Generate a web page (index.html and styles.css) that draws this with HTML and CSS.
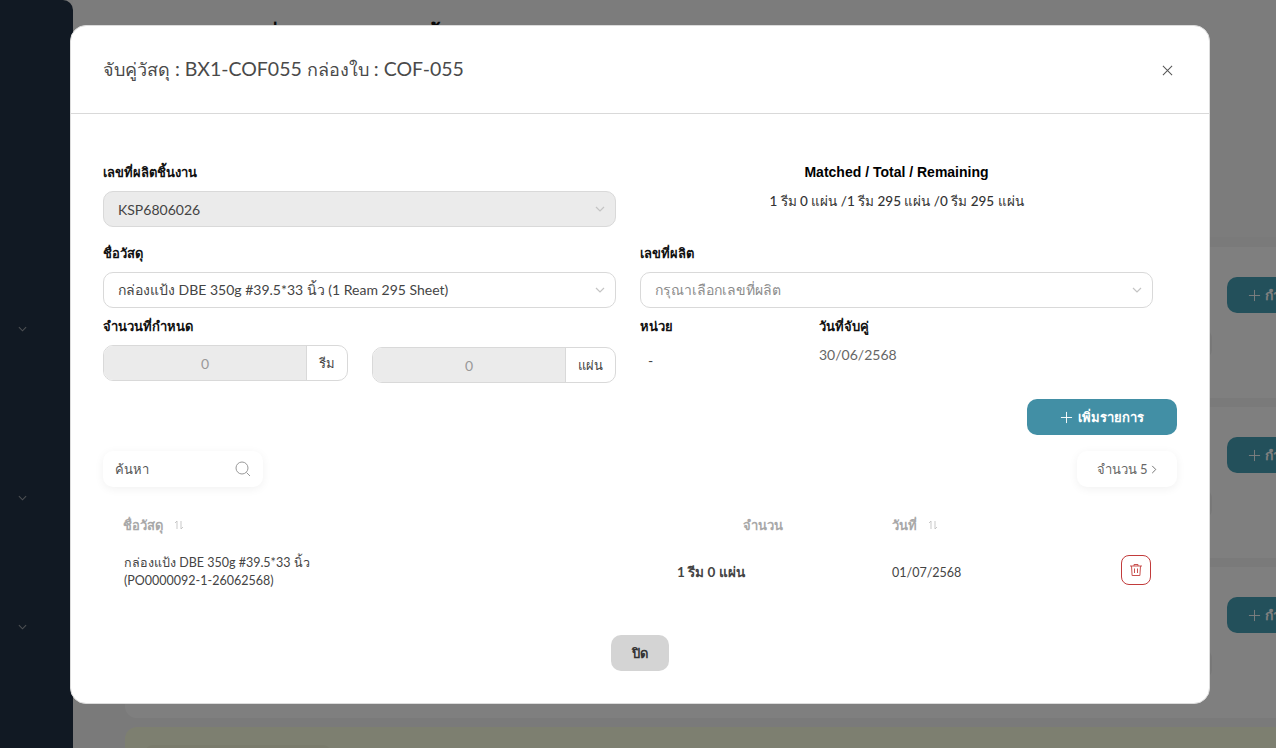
FILE: index.html
```html
<!DOCTYPE html>
<html lang="th">
<head>
  <meta charset="utf-8" />
  <title>จับคู่วัสดุ</title>
  <link rel="stylesheet" href="styles.css">
</head>
<body>
  <div class="page">
    <aside class="sidebar">
      <svg class="side-arrow first" viewBox="0 0 10 6"><path d="M1 1l4 4 4-4"/></svg>
      <svg class="side-arrow second" viewBox="0 0 10 6"><path d="M1 1l4 4 4-4"/></svg>
      <svg class="side-arrow third" viewBox="0 0 10 6"><path d="M1 1l4 4 4-4"/></svg>
    </aside>
    <main class="content">
      <header class="top-card"><h1 class="page-title">รายการที่ต้องจัดการ งานทั้งหมด</h1></header>
      <section class="bg-card"><span class="bg-pill"></span><span class="bg-btn"><svg viewBox="0 0 14 14"><path d="M7 1v12M1 7h12"/></svg>กำหนด</span></section>
      <section class="bg-card"><span class="bg-pill"></span><span class="bg-btn"><svg viewBox="0 0 14 14"><path d="M7 1v12M1 7h12"/></svg>กำหนด</span></section>
      <section class="bg-card"><span class="bg-pill"></span><span class="bg-btn"><svg viewBox="0 0 14 14"><path d="M7 1v12M1 7h12"/></svg>กำหนด</span></section>
      <section class="bg-card olive"><span class="bg-chip"></span></section>
    </main>
  </div>

  <div class="backdrop"></div>

  <div class="modal">
    <header class="modal-head">
      <h2><span class="th">จับคู่วัสดุ</span> : BX1-COF055 <span class="th">กล่องใบ</span> : COF-055</h2>
      <svg class="close-x" viewBox="0 0 12 12"><path d="M1 1l10 10M11 1L1 11"/></svg>
    </header>

    <div class="modal-body">
      <div class="form-grid">
        <div class="field field-job">
          <label>เลขที่ผลิตชิ้นงาน</label>
          <div class="select disabled">
            <span>KSP6806026</span>
            <svg class="chev" viewBox="0 0 10 6"><path d="M1 1l4 4 4-4"/></svg>
          </div>
        </div>
        <div class="summary">
          <strong>Matched / Total / Remaining</strong>
          <p>1 รีม 0 แผ่น /1 รีม 295 แผ่น /0 รีม 295 แผ่น</p>
        </div>
        <div class="field field-mat">
          <label>ชื่อวัสดุ</label>
          <div class="select">
            <span>กล่องแป้ง DBE 350g #39.5*33 นิ้ว (1 Ream 295 Sheet)</span>
            <svg class="chev" viewBox="0 0 10 6"><path d="M1 1l4 4 4-4"/></svg>
          </div>
        </div>
        <div class="field field-mat">
          <label>เลขที่ผลิต</label>
          <div class="select">
            <span class="placeholder">กรุณาเลือกเลขที่ผลิต</span>
            <svg class="chev" viewBox="0 0 10 6"><path d="M1 1l4 4 4-4"/></svg>
          </div>
        </div>
        <div class="field-qty">
          <label>จำนวนที่กำหนด</label>
          <div class="qty-row">
            <div class="qty"><span class="qty-val">0</span><span class="qty-unit">รีม</span></div>
            <div class="qty lower"><span class="qty-val">0</span><span class="qty-unit">แผ่น</span></div>
          </div>
        </div>
        <div class="field-info">
          <div class="info-unit">
            <label>หน่วย</label>
            <span class="info-dash">-</span>
          </div>
          <div>
            <label>วันที่จับคู่</label>
            <span class="info-date">30/06/2568</span>
          </div>
        </div>
      </div>

      <div class="add-row">
        <button class="btn-add"><svg viewBox="0 0 14 14"><path d="M7 1v12M1 7h12"/></svg>เพิ่มรายการ</button>
      </div>

      <div class="tools">
        <div class="search">
          <span>ค้นหา</span>
          <svg viewBox="0 0 16 16"><circle cx="7" cy="7" r="6"/><path d="M11.5 11.5L15 15"/></svg>
        </div>
        <div class="count">จำนวน 5 <svg viewBox="0 0 6 10"><path d="M1 1l4 4-4 4"/></svg></div>
      </div>

      <div class="tbl tbl-head">
        <div>ชื่อวัสดุ <svg class="sort" viewBox="0 0 10 10"><path d="M3 9V1L1 3M7 1v8l2-2"/></svg></div>
        <div class="amount">จำนวน</div>
        <div class="date">วันที่ <svg class="sort" viewBox="0 0 10 10"><path d="M3 9V1L1 3M7 1v8l2-2"/></svg></div>
        <div></div>
      </div>
      <div class="tbl tbl-row">
        <div class="mat-name">กล่องแป้ง DBE 350g #39.5*33 นิ้ว<br>(PO0000092-1-26062568)</div>
        <div class="amount-val">1 รีม 0 แผ่น</div>
        <div class="date">01/07/2568</div>
        <div>
          <button class="btn-del">
            <svg viewBox="0 0 14 14"><path d="M1 3h12M5 3V1.500h4V3M2.500 3l.6 9.500h7.800l.6-9.500M5.500 5.500v4.500M8.500 5.500v4.500"/></svg>
          </button>
        </div>
      </div>

      <div class="foot">
        <button class="btn-close">ปิด</button>
      </div>
    </div>
  </div>
</body>
</html>
```

FILE: styles.css
```css
html, body {
  margin: 0;
  height: 100%;
  overflow: hidden;
}

body {
  font-family: 'Lato', 'Noto Sans', sans-serif;
  font-size: 14px;
  color: #444;
  background-color: #f5f5f5;
}

.page {
  display: flex;
  width: 1400px;
  height: 748px;
}

.sidebar {
  position: relative;
  width: 73px;
  flex: none;
  background-color: #223346;
  border-top-right-radius: 10px;
}

.side-arrow {
  position: absolute;
  left: 18px;
  width: 9px;
  height: 6px;
  fill: none;
  stroke: #9a9fa6;
  stroke-width: 1.2;
}
.side-arrow.first { top: 326px; }
.side-arrow.second { top: 495px; }
.side-arrow.third { top: 624px; }

.content {
  flex: 1;
  padding-left: 52px;
}

.top-card {
  height: 237px;
  margin: 0 0 10px -52px;
  background-color: #f9f9f9;
}

.page-title {
  margin: 0;
  padding: 20px 0 0 116px;
  font-size: 22px;
  font-weight: 700;
  word-spacing: 1px;
  color: #111;
}

.bg-card {
  display: flex;
  align-items: flex-start;
  height: 151px;
  margin-bottom: 9px;
  padding-top: 30px;
  box-sizing: border-box;
  background-color: #ffffff;
  border-radius: 12px;
}

.bg-pill {
  width: 100px;
  height: 28px;
  margin: 53px 0 0 987px;
  background-color: #f0f0f0;
  border-radius: 8px;
}

.bg-btn {
  display: flex;
  align-items: center;
  gap: 4px;
  width: 150px;
  height: 36px;
  margin-left: 15px;
  padding-left: 21px;
  box-sizing: border-box;
  color: #fff;
  font-weight: 700;
  background-color: #46a0b6;
  border-radius: 10px;
}

.bg-btn svg {
  width: 13px;
  height: 13px;
  fill: none;
  stroke: #fff;
}

.bg-card.olive {
  background-color: #fbfee0;
  padding: 18px 0 0 20px;
}

.bg-chip {
  width: 186px;
  height: 30px;
  background-color: #f4f7d8;
  border-radius: 8px;
}

.backdrop {
  position: fixed;
  inset: 0;
  background-color: rgba(0, 0, 0, 0.5);
}

.modal {
  position: fixed;
  left: 70px;
  top: 25px;
  width: 1140px;
  height: 679px;
  box-sizing: border-box;
  background-color: #fff;
  border: 1px solid #dcdcdc;
  border-radius: 16px;
}

.modal-head {
  display: flex;
  align-items: center;
  justify-content: space-between;
  height: 87px;
  padding: 0 36px 0 32px;
  border-bottom: 1px solid #d9d9d9;
}

.modal-head h2 {
  margin: 0;
  font-size: 19.500px;
  font-weight: 400;
  color: #4a4a4a;
}

.modal-head .th {
  font-size: 18px;
}

.close-x {
  width: 11px;
  height: 11px;
  margin-top: 2px;
  fill: none;
  stroke: #555;
  stroke-width: 1.100;
}

.modal-body {
  padding: 48px 32px 0;
}

.form-grid {
  display: grid;
  grid-template-columns: 513px 513px;
  column-gap: 24px;
}

label {
  display: block;
  font-size: 13px;
  font-weight: 700;
  line-height: 20px;
  color: #111;
}

.select {
  display: flex;
  align-items: center;
  justify-content: space-between;
  height: 36px;
  margin-top: 9px;
  padding: 0 10px 0 14px;
  box-sizing: border-box;
  border: 1px solid #d9d9d9;
  border-radius: 10px;
  font-size: 14px;
  color: #444;
}

.select.disabled {
  background-color: #ebebeb;
}

.placeholder {
  color: #8c8c8c;
}

.chev {
  width: 10px;
  height: 6px;
  fill: none;
  stroke: #c4c4c4;
  stroke-width: 1.200;
}

.field-job {
  height: 71px;
}

.field-mat {
  height: 65px;
  margin-top: 10px;
}

.summary {
  text-align: center;
  font-size: 14px;
}

.summary strong {
  display: block;
  font-family: 'Liberation Sans', sans-serif;
  line-height: 20px;
  color: #000;
}

.summary p {
  margin: 9px 0 0;
  line-height: 20px;
  font-size: 13.500px;
  font-weight: 500;
  color: #333;
}

.field-qty {
  margin-top: 8px;
}

.qty-row {
  display: grid;
  grid-template-columns: 245px 244px;
  column-gap: 24px;
  align-items: start;
  margin-top: 9px;
}

.qty {
  display: flex;
  height: 36px;
  box-sizing: border-box;
  border: 1px solid #d9d9d9;
  border-radius: 10px;
  overflow: hidden;
}

.qty.lower {
  margin-top: 2px;
}

.qty-val {
  flex: 1;
  display: flex;
  align-items: center;
  justify-content: center;
  color: #999;
  background-color: #ebebeb;
}

.qty-unit {
  display: flex;
  align-items: center;
  justify-content: center;
  padding: 0 12px;
  border-left: 1px solid #d9d9d9;
  font-size: 13px;
  font-weight: 500;
  color: #444;
}

.field-info {
  display: flex;
  margin-top: 8px;
}

.info-unit {
  width: 179px;
}

.info-dash {
  display: block;
  margin: 16px 0 0 8px;
}

.info-date {
  display: block;
  margin-top: 10px;
  color: #666;
}

.add-row {
  display: flex;
  justify-content: flex-end;
  margin-top: 16px;
}

button {
  font-family: inherit;
  border: none;
}

.btn-add {
  display: flex;
  align-items: center;
  justify-content: center;
  gap: 5px;
  width: 150px;
  height: 36px;
  font-size: 13px;
  font-weight: 700;
  color: #fff;
  background-color: #428fa5;
  border-radius: 10px;
}

.btn-add svg {
  width: 13px;
  height: 13px;
  fill: none;
  stroke: #fff;
}

.tools {
  display: flex;
  justify-content: space-between;
  margin-top: 16px;
}

.search, .count {
  display: flex;
  align-items: center;
  height: 36px;
  box-sizing: border-box;
  background-color: #fff;
  border-radius: 10px;
  box-shadow: 0 2px 10px rgba(0, 0, 0, 0.06);
}

.search {
  justify-content: space-between;
  width: 160px;
  padding: 0 12px;
  font-size: 13px;
  color: #555;
}

.search svg {
  width: 16px;
  height: 16px;
  fill: none;
  stroke: #999;
}

.count {
  justify-content: center;
  gap: 4px;
  width: 100px;
  font-size: 13px;
  color: #666;
}

.count svg {
  width: 6px;
  height: 9px;
  fill: none;
  stroke: #666;
}

.tbl {
  display: grid;
  grid-template-columns: 517px 143px 338px 60px;
  padding-left: 20px;
  align-items: center;
}

.tbl-head {
  margin-top: 20px;
  height: 36px;
  font-size: 13px;
  font-weight: 700;
  color: #a8a8a8;
}

.sort {
  width: 10px;
  height: 10px;
  margin-left: 8px;
  fill: none;
  stroke: #bbb;
  stroke-width: 0.800;
}

.amount {
  text-align: right;
}

.date {
  padding-left: 109px;
}

.tbl-row {
  height: 54px;
  margin-top: 2px;
  font-size: 12.500px;
  color: #444;
}

.mat-name {
  line-height: 18px;
  padding-left: 1px;
}

.amount-val {
  padding-left: 37px;
  font-size: 13.500px;
  font-weight: 700;
}

.btn-del {
  display: flex;
  align-items: center;
  justify-content: center;
  width: 30px;
  height: 30px;
  margin-top: -4px;
  padding: 0;
  background-color: #fff;
  border: 1px solid #c23b3b;
  border-radius: 8px;
}

.btn-del svg {
  width: 14px;
  height: 14px;
  fill: none;
  stroke: #c9514f;
}

.foot {
  display: flex;
  justify-content: center;
  margin-top: 36px;
}

.btn-close {
  width: 58px;
  height: 36px;
  font-size: 13px;
  font-weight: 700;
  color: #333;
  background-color: #d4d4d4;
  border-radius: 10px;
}
```
